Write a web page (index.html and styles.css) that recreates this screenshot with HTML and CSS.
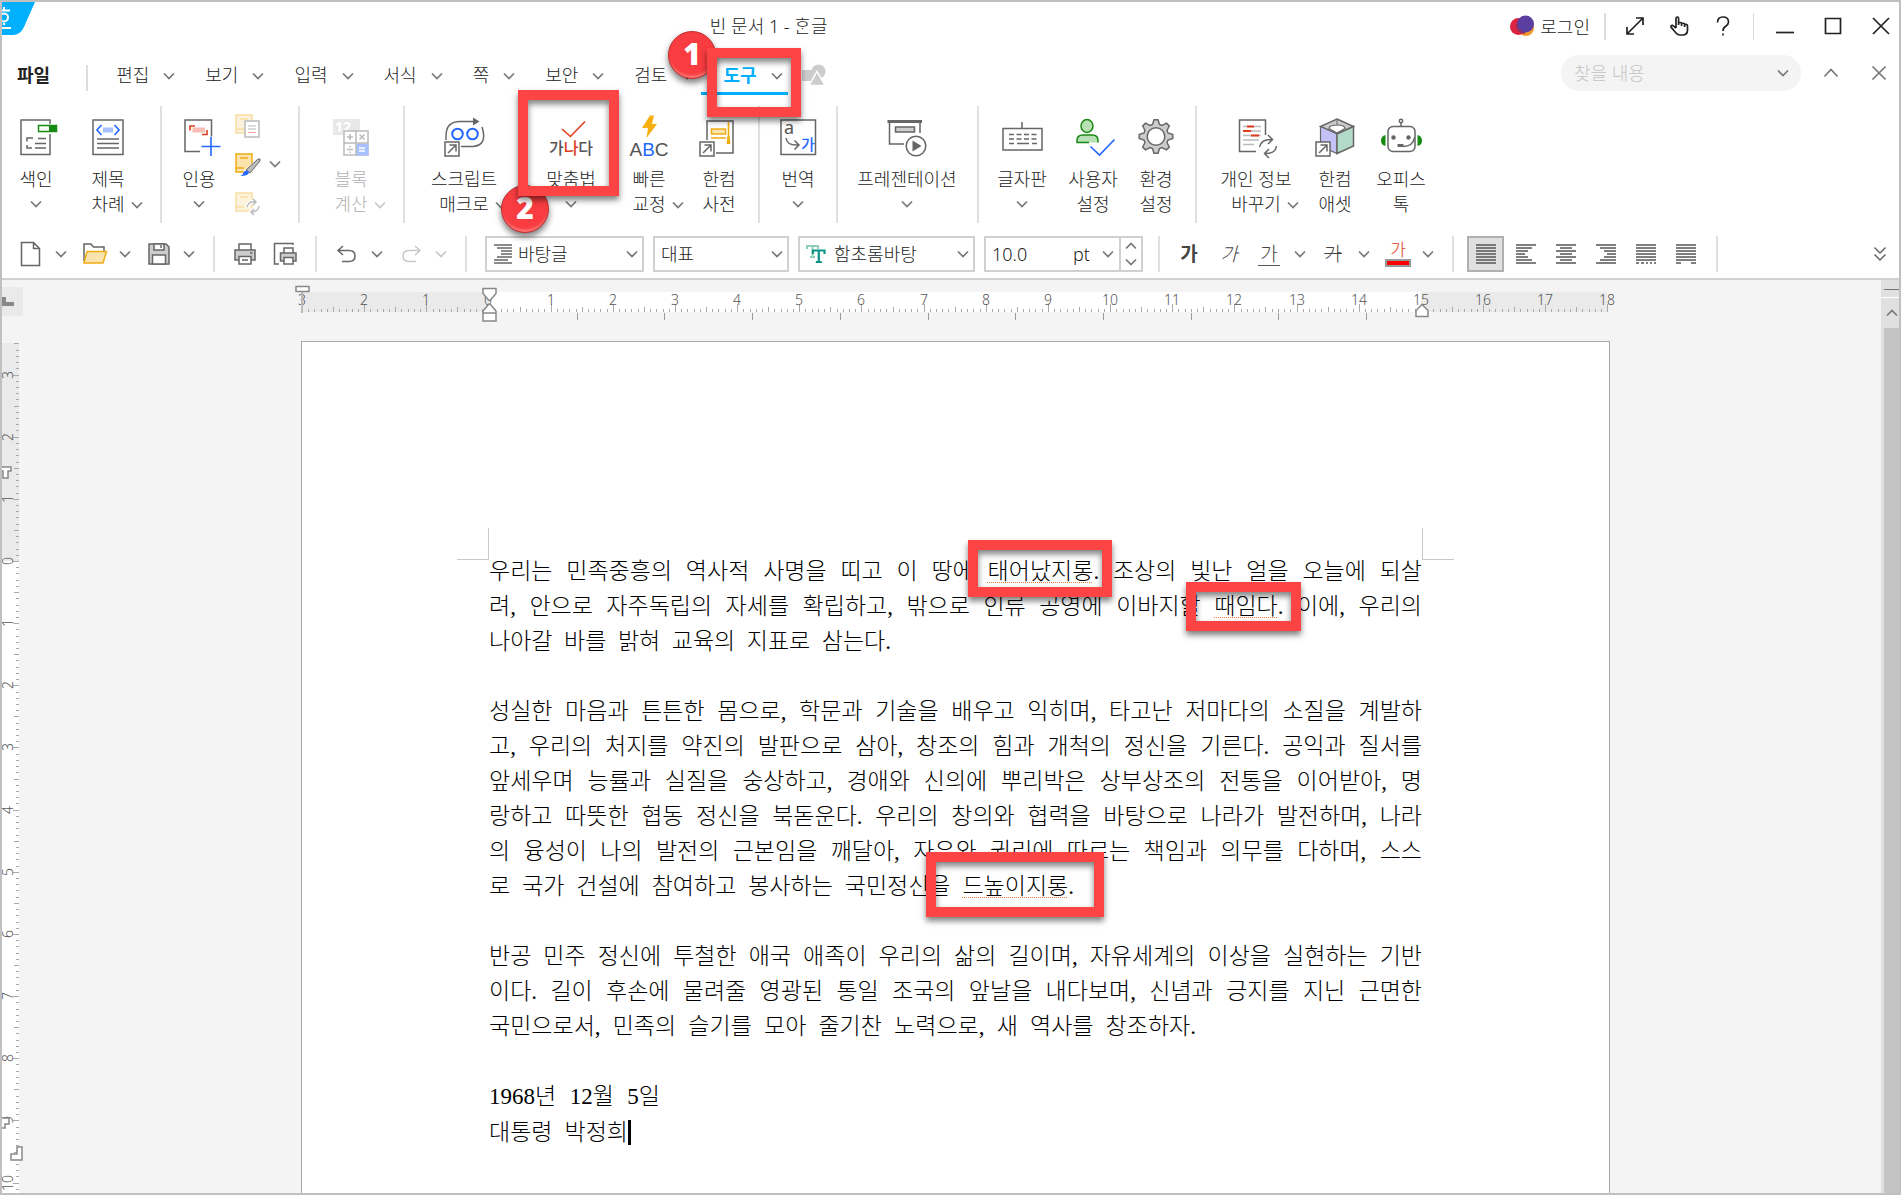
FILE: index.html
```html
<!DOCTYPE html>
<html lang="ko">
<head>
<meta charset="UTF-8">
<meta name="viewport" content="width=device-width, initial-scale=1.0">
<title>빈 문서 1 - ᄒᆞᆫ글</title>
<link rel="stylesheet" href="styles.css">
</head>
<body>
<svg class="defs" aria-hidden="true">
    <symbol id="chev" viewBox="0 0 12 8"><path d="M1 1.500l5 5 5-5" fill="none" stroke="currentColor" stroke-width="1.700"/></symbol>
    <symbol id="share" viewBox="0 0 16 16"><path d="M1 1h14v14H1z" fill="#fff" stroke="#666" stroke-width="1.500"/><path d="M4 12l7.500-7.500M5.500 4H12v6.500" fill="none" stroke="#666" stroke-width="1.500"/></symbol>
</svg>
<div class="window">
    <header class="titlebar">
        <div class="app-logo">
            <svg width="33" height="33" viewBox="0 0 33 33"><path d="M0 0h33L22 25q-4 8-11 8H0z" fill="#00b0ff"/><g fill="none" stroke="#fff" stroke-width="2"><circle cx="2" cy="15.500" r="4"/><path d="M0 8.500h8M2 5v3M0 26h9"/></g><circle cx="2" cy="22" r="1.300" fill="#fff"/></svg>
        </div>
        <h1 class="title">빈 문서 1 - ᄒᆞᆫ글</h1>
        <div class="title-actions">
            <button class="login">
                <svg width="24" height="22" viewBox="0 0 24 22"><circle cx="16" cy="13" r="8" fill="#f79a2d"/><circle cx="8.500" cy="11.500" r="8.500" fill="#dc2440"/><circle cx="15.500" cy="9" r="8.500" fill="#5b3fa0"/><path d="M7 9a8 8 0 0 0 8 9" stroke="#8f3063" stroke-width="2" fill="none"/></svg>
                로그인
            </button>
            <span class="title-sep"></span>
            <button class="win-btn" aria-label="전체 화면"><svg width="20" height="20" viewBox="0 0 20 20"><path d="M2 18L18 2M11 2h7v7M2 11v7h7"/></svg></button>
            <button class="win-btn" aria-label="터치"><svg width="20" height="20" viewBox="0 0 20 20"><path d="M7 12V2.500q0-1.500 1.300-1.500t1.300 1.500V9M9.600 7q2.500-1.200 3 .5V10M12.600 7.500q2.500-.8 3 .8V11M15.600 8.500q2.700-.6 2.900 1.500v4q0 5-5 5H11q-2.500 0-4-2l-5-6q-.5-1.700 1.500-1.600L7 12"/></svg></button>
            <button class="win-btn" aria-label="도움말"><svg width="20" height="20" viewBox="0 0 20 20"><path d="M4.500 6.500Q4.500 1 10 1t5.500 5q0 2.500-2.800 4.300Q10 12 10 15M10 17.500v2"/></svg></button>
            <span class="title-sep thin"></span>
            <button class="win-btn wide" aria-label="최소화"><svg width="20" height="20" viewBox="0 0 20 20"><path d="M1 16.500h18"/></svg></button>
            <button class="win-btn wide" aria-label="최대화"><svg width="20" height="20" viewBox="0 0 20 20"><path d="M2.500 2.500h15v15h-15z"/></svg></button>
            <button class="win-btn" aria-label="닫기"><svg width="20" height="20" viewBox="0 0 20 20"><path d="M2 2l16 16M18 2L2 18"/></svg></button>
        </div>
    </header>

    <nav class="menubar">
        <button class="file">파일</button>
        <span class="menu-sep"></span>
        <button class="tab">편집<svg class="chev"><use href="#chev"/></svg></button>
        <button class="tab">보기<svg class="chev"><use href="#chev"/></svg></button>
        <button class="tab">입력<svg class="chev"><use href="#chev"/></svg></button>
        <button class="tab">서식<svg class="chev"><use href="#chev"/></svg></button>
        <button class="tab">쪽<svg class="chev"><use href="#chev"/></svg></button>
        <button class="tab">보안<svg class="chev"><use href="#chev"/></svg></button>
        <button class="tab">검토<svg class="chev"><use href="#chev"/></svg></button>
        <button class="tab active">도구<svg class="chev"><use href="#chev"/></svg></button>
        <button class="shapes" aria-label="도형"><svg width="26" height="22" viewBox="0 0 26 22"><path d="M2 6h11v11H2z" fill="#ccc"/><circle cx="18.500" cy="7.500" r="7" fill="#ccc"/><path d="M17 7.500l8 14H9z" fill="#ccc" stroke="#fff" stroke-width="1.500"/></svg></button>
        <div class="find">
            <label class="search"><input type="text" placeholder="찾을 내용" aria-label="찾을 내용"><svg class="chev"><use href="#chev"/></svg></label>
            <button class="win-btn gray" aria-label="접기"><svg width="20" height="20" viewBox="0 0 20 20"><path d="M3.500 13.500L10 6.500l6.500 7"/></svg></button>
            <button class="win-btn gray" aria-label="문서 닫기"><svg width="20" height="20" viewBox="0 0 20 20"><path d="M3.500 3.500l13 13M16.500 3.500l-13 13"/></svg></button>
        </div>
    </nav>

    <div class="ribbon">
        <div class="group index">
            <button class="tool">
                <svg class="icon" viewBox="0 0 44 44"><path d="M36 10V6H7v34.500h29V20" class="ln"/><path d="M24.500 11.500h18v6h-18z" fill="#fff" stroke="#178a12" stroke-width="1.500"/><path d="M35 11h8v7h-8z" fill="#178a12"/><path d="M19 24h-6v3.500M13 31v3h5M24 24.500h8M21 29.500h11M21 34h11" class="ln"/></svg>
                <span>색인</span><svg class="chev"><use href="#chev"/></svg>
            </button>
            <button class="tool">
                <svg class="icon" viewBox="0 0 44 44"><path d="M7 6h30v34.500H7z" class="ln"/><path d="M17 13.500h10v5H17z" fill="#a9c0ff"/><path d="M15.500 11L11 16l4.500 5M28.500 11l4.500 5-4.500 5" fill="none" stroke="#2468ff" stroke-width="1.600"/><path d="M11 25h22M11 29.500h22M11 34h22" class="ln"/></svg>
                <span>제목</span><span class="line2">차례<svg class="chev tail"><use href="#chev"/></svg></span>
            </button>
        </div>
        <div class="group quote">
            <button class="tool">
                <svg class="icon" viewBox="0 0 44 44"><path d="M34.500 22.500V6H8v31.500h15" class="ln"/><path d="M15.500 13.500H28v5H15.500z" fill="#f7bdb5"/><path d="M18 12h-5v4.500M25 20.500h5V16" fill="none" stroke="#e03c20" stroke-width="1.600"/><path d="M24.500 32.500h19M34 23v19" stroke="#2468ff" stroke-width="1.600"/></svg>
                <span>인용</span><svg class="chev"><use href="#chev"/></svg>
            </button>
            <div class="minis">
                <button disabled aria-label="복사"><svg width="26" height="24" viewBox="0 0 26 24"><path d="M1 1h16v18H1zM1 15h8" fill="#fdf3dc" stroke="#f8dfa4" stroke-width="1.500"/><path d="M5 5h8" stroke="#f8dfa4" stroke-width="1.500"/><path d="M10 7h14v16H10z" fill="#fff" stroke="#bbb" stroke-width="1.500"/><path d="M13 12h8M13 15h8" stroke="#bbb"/><path d="M13 18.500h8" stroke="#f3a699"/></svg></button>
                <button aria-label="편집"><svg width="26" height="24" viewBox="0 0 26 24"><path d="M1 1h16v18H1zM1 15h8" fill="#fbe3ae" stroke="#f0ac14" stroke-width="1.500"/><path d="M5 5h8" stroke="#f0ac14" stroke-width="1.500"/><path d="M11 18L24 6l1 1-10 13z" fill="#bbb" stroke="#fff" stroke-width="3"/><path d="M11 17L23 6h2v2L15 20z" fill="#bbb" stroke="#666"/><path d="M5 23q3-1 3.500-3.500Q11 16 14 19q0 4-9 4z" fill="#2468ff"/></svg></button>
                <button disabled aria-label="새로 고침"><svg width="26" height="24" viewBox="0 0 26 24"><path d="M1 1h16v18H1zM1 15h8" fill="#fdf3dc" stroke="#f8dfa4" stroke-width="1.500"/><path d="M5 5h8" stroke="#f8dfa4" stroke-width="1.500"/><path d="M12 15q2-6 8-5m-2-3l3 3-3 3M24 14q-1 6-8 6m3-3l-3 3 3 3" fill="none" stroke="#fff" stroke-width="4"/><path d="M12 15q2-6 8-5m-2-3l3 3-3 3M24 14q-1 6-8 6m3-3l-3 3 3 3" fill="none" stroke="#bbb" stroke-width="1.500"/></svg></button>
            </div>
            <button class="more" aria-label="인용 더 보기"><svg class="chev"><use href="#chev"/></svg></button>
        </div>
        <div class="group calc">
            <button class="tool" disabled>
                <svg class="icon" viewBox="0 0 44 44"><path d="M4 5h27v16H4z" fill="#e8e8e8"/><text x="6" y="18" class="twelve">12</text><path d="M15 17h24v24H15z" fill="#fff" stroke="#bbb" stroke-width="1.500"/><path d="M27 29.500h12.500v12H27z" fill="#a9c0ff"/><path d="M15 29h24M27 17v24M18 23h6M21 20v6M30.500 20.500l5 5M35.500 20.500l-5 5M18 35.500h6M21 32v1.500M21 37.500V39" fill="none" stroke="#bbb" stroke-width="1.500"/><path d="M30 34h6M30 37h6" stroke="#fff" stroke-width="1.500"/></svg>
                <span>블록</span><span class="line2">계산<svg class="chev tail"><use href="#chev"/></svg></span>
            </button>
        </div>
        <div class="group proof">
            <button class="tool w4">
                <svg class="icon" viewBox="0 0 44 44"><path d="M4 26v-4Q4 7.500 18 7.500h14M40 13q6 18-9 19.500H19" class="ln"/><path d="M31 3.500l6.500 4-6.500 4z" fill="#666"/><circle cx="15.500" cy="20" r="5.300" fill="none" stroke="#2468ff" stroke-width="2"/><circle cx="30.500" cy="20" r="5.300" fill="none" stroke="#2468ff" stroke-width="2"/><use href="#share" x="2" y="27" width="16" height="16"/></svg>
                <span>스크립트</span><span class="line2">매크로<svg class="chev tail"><use href="#chev"/></svg></span>
            </button>
            <button class="tool w3">
                <svg class="icon" viewBox="0 0 44 44"><path d="M13 15l8.500 7.500L36 7.500" fill="none" stroke="#e03c20" stroke-width="1.600"/><text x="22" y="40" class="ganada">가<tspan class="red">나</tspan>다</text></svg>
                <span>맞춤법</span><svg class="chev"><use href="#chev"/></svg>
            </button>
            <button class="tool">
                <svg class="icon" viewBox="0 0 44 44"><path d="M23 1.500h4L25 10h5L19.500 24 21 14h-6z" fill="#f5b010"/><text x="22" y="42" class="abc">A<tspan class="blue">B</tspan>C</text></svg>
                <span>빠른</span><span class="line2">교정<svg class="chev tail"><use href="#chev"/></svg></span>
            </button>
            <button class="tool">
                <svg class="icon" viewBox="0 0 44 44"><path d="M10 26V7h26v32H19" class="ln"/><path d="M14.500 15h14v5h-14z" fill="#fbe3ae" stroke="#f0ac14" stroke-width="1.500"/><path d="M14 24h15M31.500 8v17" stroke="#f0ac14" stroke-width="1.600"/><path d="M30.500 22h2l1 8h-4z" fill="#f0ac14"/><use href="#share" x="2" y="27" width="16" height="16"/></svg>
                <span>한컴</span><span>사전</span>
            </button>
        </div>
        <div class="group translate">
            <button class="tool">
                <svg class="icon" viewBox="0 0 44 44"><path d="M5 6h34.500v34.500H5z" class="ln"/><text x="8" y="20" class="small-a">a</text><path d="M10 24q1 8 13 7M18.500 26.500L23 31l-4.500 4.500" class="ln"/><text x="25" y="36" class="small-ga">가</text></svg>
                <span>번역</span><svg class="chev"><use href="#chev"/></svg>
            </button>
        </div>
        <div class="group show">
            <button class="tool w6">
                <svg class="icon" viewBox="0 0 44 44"><path d="M2.500 7.500H37" stroke="#666" stroke-width="3"/><path d="M35 19V8M4.500 8v22H19" class="ln"/><path d="M10.500 13h19v5h-19z" fill="#ccc" stroke="#666" stroke-width="1.500"/><circle cx="31" cy="32" r="9.800" fill="#fff" stroke="#666" stroke-width="1.500"/><path d="M27.500 26.500l9 5.500-9 5.500z" fill="#666"/></svg>
                <span>프레젠테이션</span><svg class="chev"><use href="#chev"/></svg>
            </button>
        </div>
        <div class="group settings">
            <button class="tool w3">
                <svg class="icon" viewBox="0 0 44 44"><path d="M3 14.500h39V36H3zM22 8v6" class="ln"/><path d="M9 20.500h28M9 25h28" stroke="#666" stroke-width="1.500" stroke-dasharray="5 2.500"/><path d="M9 29.500h5M17 29.500h12M32 29.500h5" stroke="#666" stroke-width="1.500"/></svg>
                <span>글자판</span><svg class="chev"><use href="#chev"/></svg>
            </button>
            <button class="tool w3">
                <svg class="icon" viewBox="0 0 44 44"><ellipse cx="16" cy="12" rx="6" ry="6.500" fill="#b9dfb4" stroke="#178a12" stroke-width="1.500"/><path d="M6 28.500v-2Q6 21 12 21h9q6 0 6 5.500v2" fill="#b9dfb4"/><path d="M27 28.500v-2Q27 21 21 21h-9q-6 0-6 5.500v2h12" fill="none" stroke="#178a12" stroke-width="1.500"/><path d="M19.500 32.500l9 8.500 15-15.500" fill="none" stroke="#2468ff" stroke-width="1.700"/></svg>
                <span>사용자</span><span>설정</span>
            </button>
            <button class="tool">
                <svg class="icon" viewBox="0 0 44 44"><g transform="translate(22 22.500)"><path d="M-3.500-12L-2-16.800H2L3.500-12 6-11 10.500-13.300 13.300-10.500 11-6 12-3.500 16.800-2V2L12 3.500 11 6 13.300 10.500 10.500 13.300 6 11 3.500 12 2 16.800H-2L-3.500 12-6 11-10.500 13.300-13.300 10.500-11 6-12 3.500-16.800 2V-2L-12-3.500-11-6-13.300-10.500-10.500-13.300-6-11Z" fill="#ccc" stroke="#666" stroke-width="1.500"/><circle r="8.800" fill="#fff" stroke="#666" stroke-width="1.500"/></g></svg>
                <span>환경</span><span>설정</span>
            </button>
        </div>
        <div class="group extra">
            <button class="tool w5">
                <svg class="icon" viewBox="0 0 44 44"><path d="M31.500 21V6H5.500v31.500H22" class="ln"/><path d="M9 12.500h18M9 17h18M9 21.500h18M9 26h16M9 30.500h11" stroke="#bbb" stroke-width="1.300"/><path d="M13 12.500h7M9 17h8M17 21.500h8" stroke="#e03c20" stroke-width="1.800"/><path d="M25.500 33q1.500-8 12.500-7.500m-4-4.500l4.500 4.500L34 30M42.500 32q-1 8-12 7.500M35 35l-4.500 4.500L35 44" class="ln"/></svg>
                <span>개인 정보</span><span class="line2">바꾸기<svg class="chev tail"><use href="#chev"/></svg></span>
            </button>
            <button class="tool">
                <svg class="icon" viewBox="0 0 44 44"><path d="M24 5l16.500 7.500L24 20 7.500 12.500z" fill="#ccc" stroke="#666" stroke-width="1.500"/><path d="M16 14.500q0-3.500 8-3.500t8 3.500L24 19z" fill="#fff" stroke="#666" stroke-width="1.200"/><path d="M24 5v6" stroke="#666"/><path d="M7.500 12.500L24 20v19.500L7.500 32z" fill="#c4c1f7" stroke="#666" stroke-width="1.200"/><path d="M40.500 12.500L24 20v19.500L40.500 32z" fill="#b2dcc9" stroke="#666" stroke-width="1.500"/><use href="#share" x="2" y="27" width="16" height="16"/></svg>
                <span>한컴</span><span>애셋</span>
            </button>
            <button class="tool w3">
                <svg class="icon" viewBox="0 0 44 44"><rect x="9" y="12.500" width="27" height="25" rx="5" class="ln"/><circle cx="22" cy="7" r="1.700" class="ln"/><path d="M22 9v3.500" class="ln"/><path d="M6.500 21v11Q2 31 2 26.500t4.500-5.500zM38.500 21v11q4.500-1 4.500-5.500T38.500 21z" fill="#178a12"/><circle cx="14.500" cy="23.500" r="2.200" fill="#666"/><circle cx="29.500" cy="23.500" r="2.200" fill="#666"/><path d="M18.500 31.500h6" stroke="#666" stroke-width="3"/><path d="M24 32.500q10 0 11.500-9" class="ln"/></svg>
                <span>오피스</span><span>톡</span>
            </button>
        </div>
    </div>

    <div class="formatbar">
        <div class="split">
            <button aria-label="새 문서"><svg width="24" height="26" viewBox="0 0 24 26"><path d="M2.500 1.500h12l6 6v17h-18zM14.500 1.500v6h6" class="ln"/></svg></button>
            <button aria-label="새 문서 메뉴"><svg class="chev"><use href="#chev"/></svg></button>
        </div>
        <div class="split">
            <button aria-label="열기"><svg width="24" height="26" viewBox="0 0 24 26"><path d="M1 20V3h7l2.500 3H21v4" class="ln"/><path d="M4 10.500h19.500L20 22H1z" fill="#fbe3ae" stroke="#f0ac14" stroke-width="1.500"/></svg></button>
            <button aria-label="열기 메뉴"><svg class="chev"><use href="#chev"/></svg></button>
        </div>
        <div class="split">
            <button aria-label="저장"><svg width="24" height="26" viewBox="0 0 24 26"><path d="M2 3h17l3 3v17H2z" fill="#ccc" stroke="#666" stroke-width="1.500"/><path d="M7 3h10v6H7zM5.500 14h13v9h-13z" fill="#fff" stroke="#666" stroke-width="1.500"/><path d="M14 4v3" stroke="#666" stroke-width="1.500"/></svg></button>
            <button aria-label="저장 메뉴"><svg class="chev"><use href="#chev"/></svg></button>
        </div>
        <span class="sep"></span>
        <button aria-label="인쇄"><svg width="24" height="26" viewBox="0 0 24 26"><path d="M6 9V3h12v6" class="ln"/><path d="M2 9h20v10H2z" fill="#ccc" stroke="#666" stroke-width="1.500"/><path d="M6 15.500h12v7.500H6z" fill="#fff" stroke="#666" stroke-width="1.500"/><path d="M17 12h2.500M9 19h6" stroke="#666" stroke-width="1.500"/></svg></button>
        <button aria-label="미리 보기"><svg width="24" height="26" viewBox="0 0 24 26"><path d="M20 4V2.500H1.500V23H6" class="ln"/><path d="M11 12V7h9v5" class="ln"/><path d="M7.500 12h15.500v8H7.500z" fill="#ccc" stroke="#666" stroke-width="1.500"/><path d="M11 16.500h9V23h-9z" fill="#fff" stroke="#666" stroke-width="1.500"/></svg></button>
        <span class="sep"></span>
        <div class="split">
            <button aria-label="되돌리기"><svg width="24" height="26" viewBox="0 0 24 26"><path d="M8 5L3 9.500 8 14M3.500 9.500H14q6 0 6 5.500t-6 5.500H7" class="ln"/></svg></button>
            <button aria-label="되돌리기 목록"><svg class="chev"><use href="#chev"/></svg></button>
        </div>
        <div class="split faded">
            <button disabled aria-label="다시 실행"><svg width="24" height="26" viewBox="0 0 24 26"><path d="M16 5l5 4.500-5 4.500M20.500 9.500H10q-6 0-6 5.500t6 5.500h7" class="ln"/></svg></button>
            <button disabled aria-label="다시 실행 목록"><svg class="chev"><use href="#chev"/></svg></button>
        </div>
        <span class="sep"></span>
        <div class="combos">
            <label class="combo style">
                <svg width="20" height="20" viewBox="0 0 20 20"><path d="M1 1h18M4 4h15M8 7h11M8 10h11M4 13h15M1 16h14M1 19h18" stroke="#666" stroke-width="1.500"/></svg>
                <select aria-label="스타일"><option>바탕글</option></select><svg class="chev"><use href="#chev"/></svg>
            </label>
            <label class="combo lang">
                <select aria-label="언어"><option>대표</option></select><svg class="chev"><use href="#chev"/></svg>
            </label>
            <label class="combo font">
                <svg width="20" height="20" viewBox="0 0 20 20"><path d="M1 5V2h11v3M6.500 2v11M4 13h5" fill="none" stroke="#8ecfb6" stroke-width="2"/><path d="M7 10V6.500h11.500V10M12.800 6.500V18M9.800 18h6" fill="none" stroke="#0c9488" stroke-width="2.200"/></svg>
                <select aria-label="글꼴"><option>함초롬바탕</option></select><svg class="chev"><use href="#chev"/></svg>
            </label>
            <div class="combo size">
                <input type="text" value="10.0" aria-label="글자 크기">
                <select aria-label="단위"><option>pt</option></select><svg class="chev"><use href="#chev"/></svg>
                <div class="spin">
                    <button aria-label="크게"><svg class="chev up"><use href="#chev"/></svg></button>
                    <button aria-label="작게"><svg class="chev"><use href="#chev"/></svg></button>
                </div>
            </div>
        </div>
        <span class="sep"></span>
        <button class="glyph bold">가</button>
        <button class="glyph italic">가</button>
        <div class="split">
            <button class="glyph under">가</button>
            <button aria-label="밑줄 메뉴"><svg class="chev"><use href="#chev"/></svg></button>
        </div>
        <div class="split">
            <button class="glyph strike">가</button>
            <button aria-label="취소선 메뉴"><svg class="chev"><use href="#chev"/></svg></button>
        </div>
        <div class="split">
            <button class="glyph color">가<span class="swatch"></span></button>
            <button aria-label="글자 색 메뉴"><svg class="chev"><use href="#chev"/></svg></button>
        </div>
        <span class="sep"></span>
        <div class="aligns">
            <button class="on" aria-label="양쪽 정렬"><svg width="22" height="22" viewBox="0 0 22 22"><path d="M1 2h20M1 5h20M1 8h20M1 11h20M1 14h20M1 17h20M1 20h20"/></svg></button>
            <button aria-label="왼쪽 정렬"><svg width="22" height="22" viewBox="0 0 22 22"><path d="M1 2h20M1 5h16M1 8h12M1 11h9M1 14h12M1 17h16M1 20h20"/></svg></button>
            <button aria-label="가운데 정렬"><svg width="22" height="22" viewBox="0 0 22 22"><path d="M1 2h20M5 5h12M1 8h20M5 11h12M1 14h20M5 17h12M1 20h20"/></svg></button>
            <button aria-label="오른쪽 정렬"><svg width="22" height="22" viewBox="0 0 22 22"><path d="M1 2h20M5 5h16M9 8h12M12 11h9M9 14h12M5 17h16M1 20h20"/></svg></button>
            <button aria-label="배분 정렬"><svg width="22" height="22" viewBox="0 0 22 22"><path d="M1 2h20M1 5h20M1 8h20M1 11h20M1 14h20M1 17h20M1 20h3M6 20h3M11 20h2M15 20h2M19 20h2"/></svg></button>
            <button aria-label="나눔 정렬"><svg width="22" height="22" viewBox="0 0 22 22"><path d="M1 2h20M1 5h20M1 8h20M1 11h20M1 14h20M1 17h20M1 20h5M16 20h5"/></svg></button>
        </div>
        <span class="sep"></span>
        <button class="overflow" aria-label="더 보기"><svg width="14" height="18" viewBox="0 0 14 18"><path d="M1.500 2.500L7 8l5.500-5.500M1.500 9.500L7 15l5.500-5.500" class="ln"/></svg></button>
    </div>

    <main class="workspace">
        <div class="vside">
            <div class="tab-kind"><svg width="21" height="29" viewBox="0 0 21 29"><path d="M2 10v7h10" fill="none" stroke="#888" stroke-width="4"/></svg></div>
            <svg class="vruler" id="vruler" width="24"></svg>
        </div>
        <div class="doc">
            <svg class="hruler" id="hruler" width="1330" height="42"></svg>
            <article class="page">
                <span class="corner left"></span>
                <span class="corner right"></span>
                <p>
                    <span class="line">우리는 민족중흥의 역사적 사명을 띠고 이 땅에 <u>태어났지롱</u>. 조상의 빛난 얼을 오늘에 되살</span>
                    <span class="line">려, 안으로 자주독립의 자세를 확립하고, 밖으로 인류 공영에 이바지할 <u>때임다</u>. 이에, 우리의</span>
                    <span class="line end1">나아갈 바를 밝혀 교육의 지표로 삼는다.</span>
                </p>
                <p>
                    <span class="line">성실한 마음과 튼튼한 몸으로, 학문과 기술을 배우고 익히며, 타고난 저마다의 소질을 계발하</span>
                    <span class="line">고, 우리의 처지를 약진의 발판으로 삼아, 창조의 힘과 개척의 정신을 기른다. 공익과 질서를</span>
                    <span class="line">앞세우며 능률과 실질을 숭상하고, 경애와 신의에 뿌리박은 상부상조의 전통을 이어받아, 명</span>
                    <span class="line">랑하고 따뜻한 협동 정신을 북돋운다. 우리의 창의와 협력을 바탕으로 나라가 발전하며, 나라</span>
                    <span class="line">의 융성이 나의 발전의 근본임을 깨달아, 자유와 권리에 따르는 책임과 의무를 다하며, 스스</span>
                    <span class="line end2">로 국가 건설에 참여하고 봉사하는 국민정신을 <u>드높이지롱</u>.</span>
                </p>
                <p>
                    <span class="line">반공 민주 정신에 투철한 애국 애족이 우리의 삶의 길이며, 자유세계의 이상을 실현하는 기반</span>
                    <span class="line">이다. 길이 후손에 물려줄 영광된 통일 조국의 앞날을 내다보며, 신념과 긍지를 지닌 근면한</span>
                    <span class="line end3">국민으로서, 민족의 슬기를 모아 줄기찬 노력으로, 새 역사를 창조하자.</span>
                </p>
                <p>
                    <span class="line date">1968년 12월 5일</span>
                    <span class="line name">대통령 박정희</span>
                </p>
                <span class="callout c3"></span>
                <span class="callout c4"></span>
                <span class="callout c5"></span>
            </article>
        </div>
        <div class="scrollbar">
            <div class="splitter"></div>
            <button class="up-btn" aria-label="위로"><svg class="chev up"><use href="#chev"/></svg></button>
            <div class="thumb"></div>
        </div>
    </main>

    <span class="badge b1">1</span>
    <span class="badge b2">2</span>
    <span class="callout c1"></span>
    <span class="callout c2"></span>
</div>
<script src="ruler.js"></script>
</body>
</html>
```
FILE: styles.css
```css
* {
    box-sizing: border-box;
}
body {
    margin: 0;
    font-family: "Noto Sans", "Noto Sans CJK KR", sans-serif;
    font-size: 18px;
    font-weight: 300;
    color: #222;
    background: #fff;
}
button, input, select {
    font: inherit;
    color: inherit;
    background: none;
    border: none;
    border-radius: 0;
    padding: 0;
    margin: 0;
    outline: none;
}
button {
    white-space: nowrap;
}
svg {
    display: block;
    flex-shrink: 0;
    overflow: visible;
}
.defs {
    position: absolute;
    width: 0;
    height: 0;
}
.window {
    position: relative;
    display: flex;
    flex-direction: column;
    min-height: 100vh;
    border: 2px solid #c0c0c0;
    overflow: hidden;
}
.chev {
    width: 12px;
    height: 8px;
    color: #777;
}
.chev.up {
    transform: rotate(180deg);
}
.ln {
    fill: none;
    stroke: #666;
    stroke-width: 1.5;
}

/* title bar */
.titlebar {
    display: flex;
    align-items: center;
    height: 48px;
}
.app-logo {
    align-self: flex-start;
}
.title {
    margin: 0 auto;
    padding-right: 8px;
    font-size: 18px;
    font-weight: 300;
    line-height: 24px;
}
.title-actions {
    display: flex;
    align-items: center;
    padding-right: 8px;
}
.login {
    display: flex;
    align-items: center;
    gap: 6px;
}
.title-sep {
    width: 2px;
    height: 27px;
    margin: 0 19px 0 14px;
    background: #ddd;
}
.title-sep.thin {
    width: 1px;
    margin: 0 21px 0 -4px;
}
.win-btn {
    width: 20px;
    margin-right: 24px;
}
.win-btn.wide {
    margin-right: 28px;
}
.win-btn:last-child {
    margin-right: 0;
}
.win-btn path {
    fill: none;
    stroke: #222;
    stroke-width: 1.7;
}
.win-btn.gray path {
    stroke: #777;
}

/* menu */
.menubar {
    display: flex;
    align-items: flex-start;
    gap: 3px;
    height: 56px;
}
.file {
    height: 45px;
    padding: 3px 0 0 15px;
    font-weight: 700;
}
.menu-sep {
    width: 2px;
    height: 26px;
    margin: 15px 3px 0 33px;
    background: #ddd;
}
.tab {
    display: flex;
    align-items: center;
    gap: 14px;
    height: 45px;
    padding: 6px 5px 0 22px;
    border-bottom: 3px solid transparent;
}
.tab .chev {
    margin-top: 4px;
}
.tab.active {
    font-weight: 700;
    color: #00b0ff;
    border-bottom-color: #00b0ff;
}
.shapes {
    margin: 14px 0 0 9px;
}
.find {
    display: flex;
    align-items: center;
    margin: 5px 10px 0 auto;
}
.search {
    display: flex;
    align-items: center;
    width: 240px;
    height: 36px;
    margin-right: 20px;
    padding: 0 12px 0 13px;
    border-radius: 18px;
    background: #f4f4f4;
}
.search input {
    flex: 1;
    min-width: 0;
}
.search input::placeholder {
    color: #c4c4c4;
}
.find .win-btn:not(:last-child) {
    margin-right: 28px;
}

/* ribbon */
.ribbon {
    display: flex;
    height: 117px;
    margin-bottom: 13px;
}
.group {
    display: flex;
    padding-top: 8px;
    border-right: 2px solid #e0e0e0;
}
.group:last-child {
    border-right: none;
}
.index {
    gap: 36px;
    padding-left: 16px;
    padding-right: 34px;
}
.quote {
    padding-left: 19px;
    padding-right: 17px;
}
.calc {
    padding-left: 33px;
    padding-right: 34px;
}
.proof {
    gap: 34px;
    padding-left: 25px;
    padding-right: 21px;
}
.translate {
    padding-left: 20px;
    padding-right: 20px;
}
.show {
    padding-left: 19px;
    padding-right: 20px;
}
.settings {
    gap: 19px;
    padding-left: 17px;
    padding-right: 21px;
}
.extra {
    gap: 22px;
    padding-left: 22px;
}
.tool {
    display: flex;
    flex-direction: column;
    align-items: center;
    width: 36px;
    line-height: 25px;
}
.tool.w3 {
    width: 52px;
}
.tool.w4 {
    width: 68px;
    margin-right: 13px;
}
.tool.w5 {
    width: 74px;
    margin-right: 2px;
}
.tool.w6 {
    width: 100px;
}
.tool .icon {
    width: 44px;
    height: 44px;
    margin-bottom: 9px;
}
.tool > .chev {
    margin-top: 8px;
}
.line2 {
    display: flex;
    align-items: center;
}
.tail {
    margin-left: 6px;
    margin-right: -18px;
}
button:disabled {
    color: #b0b0b0;
}
button:disabled .chev {
    color: #c8c8c8;
}
.minis {
    display: flex;
    flex-direction: column;
    gap: 15px;
    margin-left: 18px;
}
.more {
    align-self: flex-start;
    margin: 46px 0 0 8px;
}
.twelve {
    font-size: 14px;
    font-weight: 700;
    fill: #fff;
}
.ganada {
    font-size: 16px;
    font-weight: 500;
    text-anchor: middle;
    fill: #555;
}
.abc {
    font-family: "Liberation Sans", sans-serif;
    font-size: 19px;
    font-weight: 400;
    text-anchor: middle;
    fill: #555;
}
.red {
    fill: #e03c20;
}
.blue {
    fill: #2468ff;
}
.small-a {
    font-size: 18px;
    font-weight: 400;
    fill: #555;
}
.small-ga {
    font-size: 15px;
    font-weight: 500;
    fill: #2468ff;
}

/* format bar */
.formatbar {
    display: flex;
    align-items: center;
    gap: 16px;
    height: 44px;
    padding: 0 12px 6px 17px;
    border-bottom: 2px solid #d0d0d0;
}
.sep {
    width: 2px;
    height: 36px;
    margin: 0 2px;
    background: #e0e0e0;
}
.split {
    display: flex;
    align-items: center;
    gap: 12px;
}
.faded .ln {
    stroke: #c8c8c8;
}
.combos {
    display: flex;
    gap: 9px;
    margin-right: -3px;
}
.combo {
    display: flex;
    align-items: center;
    gap: 5px;
    height: 36px;
    padding: 0 4px 0 6px;
    border: 2px solid #d0d0d0;
}
.combo select {
    flex: 1;
    min-width: 0;
    appearance: none;
}
.style {
    width: 159px;
}
.lang {
    width: 136px;
}
.font {
    width: 177px;
}
.font select {
    padding-left: 3px;
}
.size {
    width: 159px;
    padding-right: 0;
}
.size input {
    flex: 1;
    min-width: 0;
}
.size select {
    flex: none;
    margin-right: 7px;
}
.spin {
    display: flex;
    flex-direction: column;
    justify-content: space-around;
    height: 100%;
    padding: 0 4px;
    border-left: 2px solid #d0d0d0;
}
.spin button {
    display: flex;
    align-items: center;
}
.glyph {
    width: 22px;
    margin-right: 2px;
    font-size: 19px;
    line-height: 24px;
    color: #444;
}
.glyph.bold {
    font-weight: 600;
}
.glyph.italic {
    font-style: italic;
}
.glyph.under {
    line-height: 22px;
    border-bottom: 1px solid #555;
}
.glyph.strike {
    text-decoration: line-through;
}
.glyph.color {
    width: 26px;
    margin: 0 -1px;
    font-size: 17px;
    line-height: 18px;
    color: #e03c20;
}
.swatch {
    display: block;
    height: 8px;
    border: 2px solid #999;
    background: #f00;
}
.aligns {
    display: flex;
    gap: 3px;
    margin: 0 -6px 0 -5px;
}
.aligns button {
    display: flex;
    align-items: center;
    justify-content: center;
    width: 37px;
    height: 36px;
}
.aligns .on {
    background: #e0e0e0;
    border: 2px solid #b0b0b0;
}
.aligns path {
    stroke: #555;
    stroke-width: 1.5;
}
.overflow {
    margin-left: auto;
}

/* workspace */
.workspace {
    display: flex;
    flex: 1;
    background: #f4f4f4;
}
.vside {
    display: flex;
    flex-direction: column;
    gap: 27px;
    width: 28px;
    padding-top: 7px;
}
.tab-kind {
    width: 21px;
    background: #eaeaea;
}
.vruler {
    flex: 1;
}
.vruler, .hruler {
    font-size: 14px;
}
.doc {
    display: flex;
    flex-direction: column;
    flex: 1;
    min-width: 0;
    max-width: 1309px;
    margin: 0 auto;
}
.hruler {
    margin: 5px 0 14px;
}
.page {
    position: relative;
    flex: 1;
    padding: 212px 187px 24px;
    border: 1px solid #a8a8a8;
    border-bottom: none;
    background: #fff;
}
.page p {
    margin: 0 0 35px;
    font-family: "Liberation Serif", "Noto Sans CJK KR", serif;
    font-size: 23px;
    line-height: 35px;
    color: #000;
}
.page p:last-of-type {
    margin: 0;
}
.line {
    display: block;
    white-space: nowrap;
    text-align-last: justify;
}
.end1 {
    width: 402px;
}
.end2 {
    width: 585px;
}
.end3 {
    width: 707px;
}
.date {
    width: 171px;
}
.name {
    width: 142px;
    line-height: 25px;
    margin-top: 6px;
    border-right: 3px solid #000;
}
.page u {
    text-decoration: underline dotted #f08030 1px;
    text-underline-offset: 3px;
}
.corner {
    position: absolute;
    top: 186px;
    width: 32px;
    height: 32px;
    border-bottom: 1px solid #c8c8c8;
}
.corner.left {
    left: 155px;
    border-right: 1px solid #c8c8c8;
}
.corner.right {
    right: 155px;
    border-left: 1px solid #c8c8c8;
}
.scrollbar {
    display: flex;
    flex-direction: column;
    width: 18px;
    padding-top: 2px;
    background: #e0e0e0;
}
.splitter {
    height: 16px;
    padding-top: 7px;
    border-bottom: 1px solid #fff;
}
.splitter::before {
    content: "";
    display: block;
    height: 1px;
    margin-left: 3px;
    background: #777;
}
.up-btn {
    display: flex;
    align-items: center;
    justify-content: center;
    height: 30px;
    padding-left: 3px;
}
.thumb {
    flex: 1;
    margin-left: 3px;
    background: #c4c4c4;
}

/* step marks over the window */
.callout {
    position: absolute;
    border: 10px solid #fc4444;
    box-shadow: 0 4px 6px rgba(0, 0, 0, 0.5), inset 0 4px 6px rgba(0, 0, 0, 0.5);
    pointer-events: none;
}
.c1 {
    left: 705px;
    top: 46px;
    width: 94px;
    height: 69px;
}
.c2 {
    left: 516px;
    top: 88px;
    width: 101px;
    height: 106px;
}
.c3 {
    left: 666px;
    top: 198px;
    width: 144px;
    height: 57px;
}
.c4 {
    left: 884px;
    top: 240px;
    width: 115px;
    height: 49px;
}
.c5 {
    left: 624px;
    top: 510px;
    width: 178px;
    height: 65px;
}
.badge {
    position: absolute;
    width: 48px;
    height: 48px;
    border-radius: 50%;
    font-family: "Open Sans", sans-serif;
    font-size: 30px;
    font-weight: 800;
    line-height: 44px;
    text-align: center;
    color: #fff;
    background: #f83c40;
    border: 1px solid #c03030;
    box-shadow: 0 4px 6px rgba(0, 0, 0, 0.5), inset 0 -4px 3px -2px #ff8080;
}
.b1 {
    left: 666px;
    top: 29px;
}
.b2 {
    left: 499px;
    top: 183px;
}
```
FILE: ruler.js
```js
// one centimetre at the current zoom
var CM = 62.16;

function rect(x, y, w, h, fill) {
    return '<rect x="' + x + '" y="' + y + '" width="' + w + '" height="' + h + '" fill="' + fill + '"/>';
}

function horizontal() {
    var out = rect(1, 7, 187, 20, "#eaeaea") + rect(188, 7, 932, 20, "#fff") + rect(1120, 7, 186, 20, "#eaeaea");
    for (var i = 0; i <= 210; i++) {
        var x = Math.round(1 + i * CM / 10);
        var h = i % 10 === 0 ? 8 : (i % 5 === 0 ? 5 : 3);
        out += rect(x, 27 - h, 1, h, "#aaa");
        if (i % 10 === 0) {
            out += '<text x="' + x + '" y="20" text-anchor="middle" fill="#555">' + Math.abs(i / 10 - 3) + '</text>';
        }
    }
    // default tab stops
    for (var t = 1; t <= 10; t++) {
        out += rect(Math.round(188 + t * 87.7), 28, 1, 7, "#999");
    }
    var mark = ' fill="#fff" stroke="#888" stroke-width="1.5"/>';
    out += rect(0, 6, 2, 22, "#bbb");
    out += '<path d="M-5 1.500h13v5h-13z"' + mark;
    out += '<path d="M182 3.500h13v5l-6 7h-1l-6-7z"' + mark;
    out += '<path d="M188 19h1l6 7v10h-13V26zM182 28h13"' + mark;
    out += '<path d="M1121 19.500l6 6v6h-12v-6z"' + mark;
    document.getElementById("hruler").innerHTML = out;
}

function vertical() {
    var out = rect(0, 0, 17, 218, "#eaeaea") + rect(0, 218, 17, "100%", "#fff");
    for (var i = -35; i <= 102; i++) {
        var y = Math.round(218 + i * CM / 10);
        var w = i % 10 === 0 ? 6 : (i % 5 === 0 ? 5 : 3);
        out += rect(17 - w, y, w, 1, "#aaa");
        if (i % 10 === 0) {
            out += '<text transform="translate(11 ' + y + ') rotate(-90)" text-anchor="middle" fill="#555">' + Math.abs(i / 10) + '</text>';
        }
    }
    var mark = ' fill="#fff" stroke="#888" stroke-width="1.5"/>';
    out += '<path d="M-1 124h10v4H6v7H1v-7h-2z"' + mark;
    out += '<path d="M-1 775h8v6h-4v4h-4z"' + mark;
    out += '<path d="M15 804h5v13H9v-6h6z"' + mark;
    document.getElementById("vruler").innerHTML = out;
}

horizontal();
vertical();
```
